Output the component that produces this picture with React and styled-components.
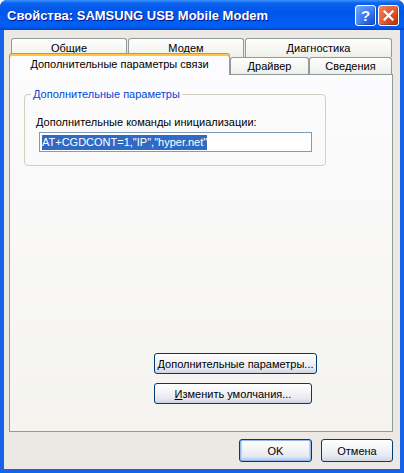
import React from 'react';
import styled, { createGlobalStyle } from 'styled-components';

const GlobalStyle = createGlobalStyle`
  html, body {
    margin: 0;
    padding: 0;
    background: #ffffff;
  }
  body {
    font-family: 'Liberation Sans', Arial, sans-serif;
    font-size: 11px;
    color: #000;
  }
`;

const Window = styled.div`
  width: 404px;
  height: 473px;
  display: flex;
  flex-direction: column;
  border-radius: 7px 7px 0 0;
  overflow: hidden;
  background: #0831d9;
`;

const TitleBar = styled.div`
  flex: none;
  height: 30px;
  display: flex;
  align-items: center;
  padding: 0 5px 0 7px;
  background: linear-gradient(
    180deg,
    #3d95ff 0%,
    #0a63ee 10%,
    #0055e8 40%,
    #0060f4 85%,
    #0056e6 93%,
    #003dd0 100%
  );
`;

const Title = styled.div`
  flex: 1;
  color: #ffffff;
  font-family: 'Liberation Sans', Arial, sans-serif;
  font-weight: bold;
  font-size: 13px;
  text-shadow: 1px 1px #0f1089;
  white-space: nowrap;
`;

const CaptionButton = styled.div`
  width: 19px;
  height: 19px;
  margin-left: 2px;
  border: 1px solid #ffffff;
  border-radius: 3px;
  display: flex;
  align-items: center;
  justify-content: center;
  color: #ffffff;
  font-family: 'Liberation Sans', Arial, sans-serif;
  font-weight: bold;
  font-size: 15px;
  background: ${props => props.close
    ? 'radial-gradient(circle at 85% 85%, #c13a14 0%, #e0552c 45%, #f08a68 100%)'
    : 'radial-gradient(circle at 85% 85%, #1c52d8 0%, #3a78f0 45%, #7eaaf8 100%)'};
  box-shadow: inset -1px -1px 1px rgba(0, 0, 0, 0.25);
`;

const Client = styled.div`
  flex: 1;
  display: flex;
  flex-direction: column;
  padding: 8px 7px 7px 5px;
  background: #ece9e4;
  border: 4px solid #1662e8;
  border-top: none;
`;

const TabStrip = styled.div`
  flex: none;
  display: flex;
  flex-direction: column;
`;

const TabRow = styled.div`
  display: flex;
  align-items: flex-end;
  gap: ${props => props.front ? '0' : '1px'};
  margin-left: ${props => props.front ? '0' : '2px'};
  margin-top: ${props => props.front ? '-4px' : '0'};
  margin-bottom: ${props => props.front ? '-1px' : '0'};
  height: ${props => props.front ? '22px' : '19px'};
  position: relative;
  z-index: ${props => props.front ? 2 : 1};
`;

const Tab = styled.div`
  box-sizing: border-box;
  width: ${props => props.width}px;
  height: ${props => props.active ? '22px' : props.front ? '17px' : '19px'};
  margin-bottom: ${props => props.front && !props.active ? '1px' : '0'};
  display: flex;
  align-items: ${props => props.front || props.active ? 'center' : 'flex-start'};
  justify-content: center;
  padding-top: ${props => props.front && !props.active ? '0' : props.active ? '0' : '3px'};
  padding-bottom: ${props => props.active ? '2px' : '0'};
  border: 1px solid #919b9c;
  border-bottom: none;
  border-top-color: ${props => props.active ? '#e68b2c' : '#919b9c'};
  border-radius: 3px 3px 0 0;
  background: ${props => props.active
    ? '#fcfcfe'
    : 'linear-gradient(180deg, #ffffff, #fafaf9 26%, #f0f0ea 95%, #ecebe6)'};
  box-shadow: ${props => props.active ? 'inset 0 2px #ffc83c' : 'none'};
  white-space: nowrap;
`;

const Panel = styled.div`
  box-sizing: border-box;
  height: 358px;
  flex: none;
  display: flex;
  flex-direction: column;
  align-items: flex-start;
  padding: 13px 0 27px 14px;
  border: 1px solid #919b9c;
  background: linear-gradient(180deg, #fcfcfe, #f4f3ee);
`;

const GroupBox = styled.fieldset`
  box-sizing: border-box;
  width: 302px;
  margin: 0;
  padding: 2px 11px 13px 11px;
  border: 1px solid #d0d0bf;
  border-radius: 4px;
`;

const Legend = styled.legend`
  margin-left: -5px;
  padding: 0 2px;
  color: #0046d5;
  line-height: 13px;
`;

const FieldLabel = styled.div`
  line-height: 13px;
  margin-top: 13px;
`;

const TextBox = styled.div`
  box-sizing: border-box;
  width: 273px;
  height: 20px;
  margin: 3px 0 0 3px;
  padding: 0 2px;
  display: flex;
  align-items: center;
  border: 1px solid #7f9db9;
  background: #ffffff;
`;

const Selection = styled.span`
  background: #316ac5;
  color: #ffffff;
  line-height: 15px;
  white-space: pre;
`;

const Mnemonic = styled.span`
  text-decoration: underline;
`;

const ButtonStack = styled.div`
  margin-top: auto;
  margin-left: 130px;
  display: flex;
  flex-direction: column;
  align-items: flex-start;
  gap: 9px;
`;

const Button = styled.div`
  box-sizing: border-box;
  width: ${props => props.width}px;
  height: ${props => props.height || 21}px;
  display: flex;
  align-items: center;
  justify-content: center;
  border: 1px solid #003c74;
  border-radius: 3px;
  background: linear-gradient(180deg, #ffffff 0%, #f6f6f8 35%, #e8eaf0 75%, #cdd4e2 100%);
  box-shadow: ${props => props.primary
    ? 'inset 0 0 0 1px #98b8ea, inset 0 -1px 0 2px #bcd4f6'
    : 'none'};
  white-space: nowrap;
`;

const Footer = styled.div`
  margin-top: 7px;
  display: flex;
  justify-content: flex-end;
  gap: 9px;
`;

function App() {
  return (
    <>
      <GlobalStyle />
      <Window>
        <TitleBar>
          <Title>Свойства: SAMSUNG USB Mobile Modem</Title>
          <CaptionButton>?</CaptionButton>
          <CaptionButton close>
            <svg width="11" height="11" viewBox="0 0 11 11">
              <path d="M1.5 1.5 L9.5 9.5 M9.5 1.5 L1.5 9.5" stroke="#ffffff" strokeWidth="2.2" strokeLinecap="square" />
            </svg>
          </CaptionButton>
        </TitleBar>
        <Client>
          <TabStrip>
            <TabRow>
              <Tab width={116}>Общие</Tab>
              <Tab width={116}>Модем</Tab>
              <Tab width={147}>Диагностика</Tab>
            </TabRow>
            <TabRow front>
              <Tab width={221} active>Дополнительные параметры связи</Tab>
              <Tab width={79} front>Драйвер</Tab>
              <Tab width={83} front>Сведения</Tab>
            </TabRow>
          </TabStrip>
          <Panel>
            <GroupBox>
              <Legend>Дополнительные параметры</Legend>
              <FieldLabel>
                <Mnemonic>Д</Mnemonic>ополнительные команды инициализации:
              </FieldLabel>
              <TextBox>
                <Selection>AT+CGDCONT=1,"IP","hyper.net"</Selection>
              </TextBox>
            </GroupBox>
            <ButtonStack>
              <Button width={163}>
                <span><Mnemonic>Д</Mnemonic>ополнительные параметры...</span>
              </Button>
              <Button width={158}>
                <span><Mnemonic>И</Mnemonic>зменить умолчания...</span>
              </Button>
            </ButtonStack>
          </Panel>
          <Footer>
            <Button width={73} height={23} primary>OK</Button>
            <Button width={72} height={23}>Отмена</Button>
          </Footer>
        </Client>
      </Window>
    </>
  );
}

export default App;
